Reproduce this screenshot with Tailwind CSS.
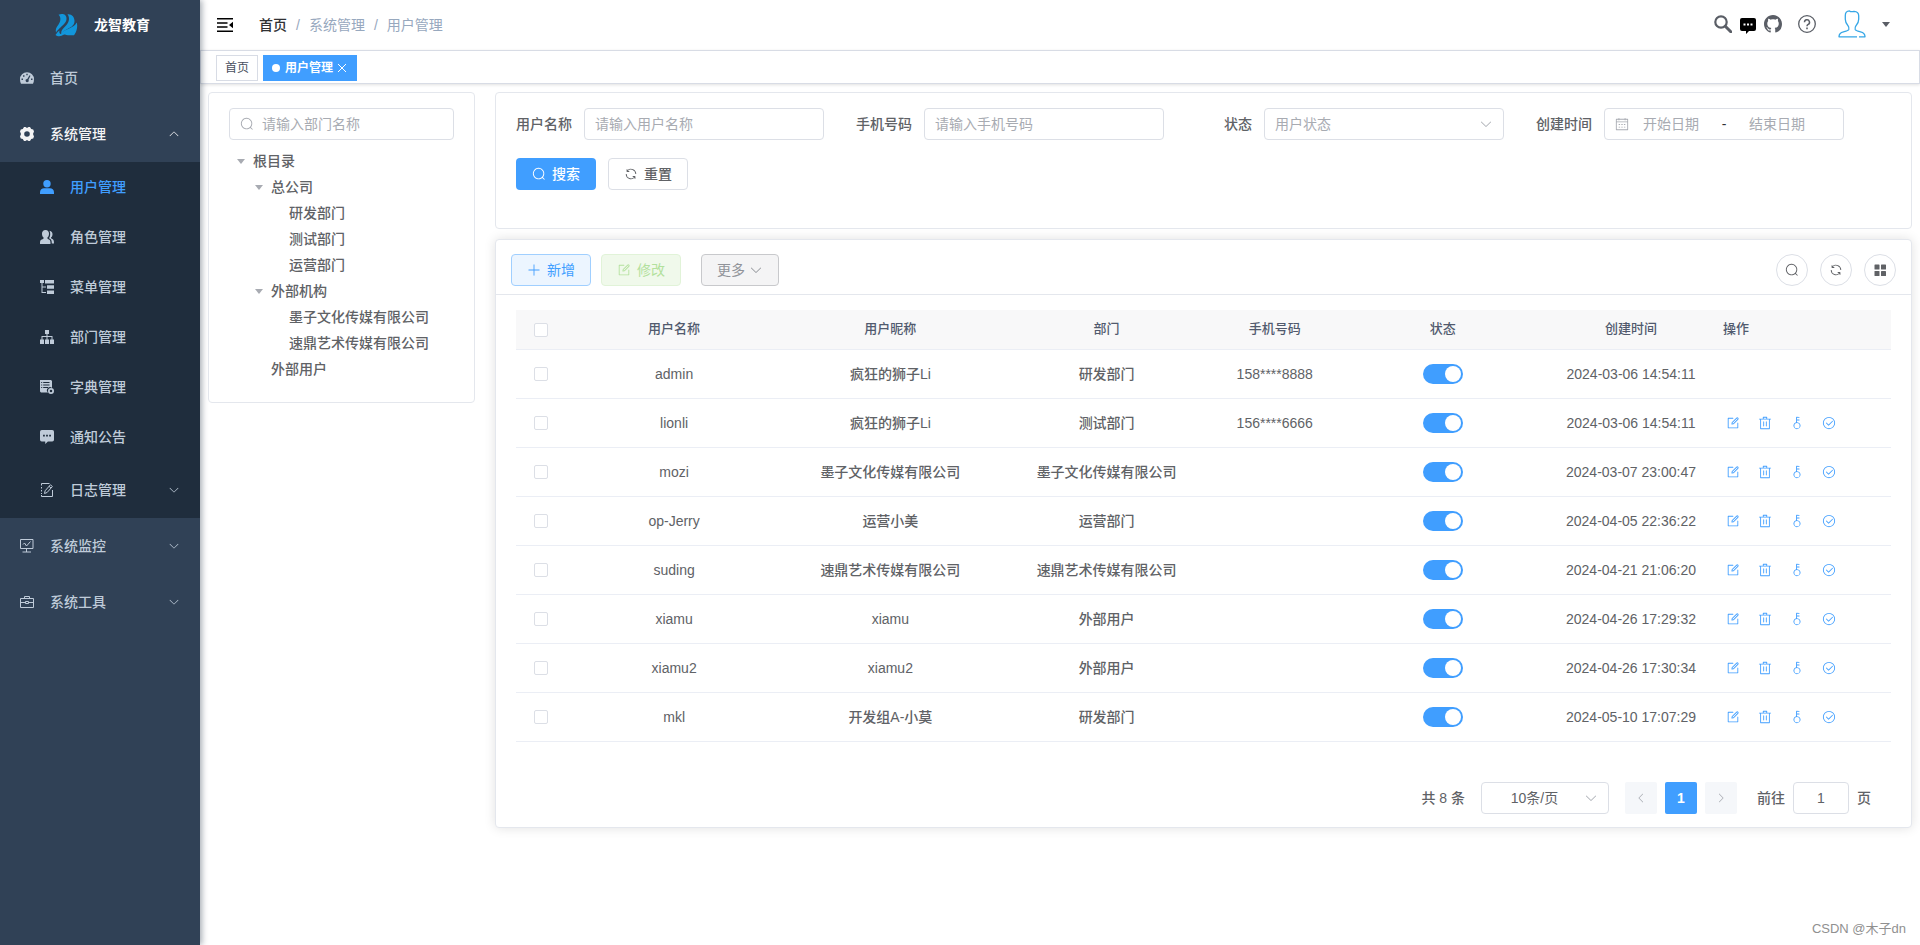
<!DOCTYPE html>
<html lang="zh-CN">
<head>
<meta charset="utf-8">
<title>用户管理</title>
<script src="https://cdn.jsdelivr.net/npm/@tailwindcss/browser@4"></script>
</head>
<body class="bg-white text-sm text-[#606266] font-['Liberation_Sans','Noto_Sans_CJK_SC',sans-serif]">
<svg class="hidden" aria-hidden="true">
  <symbol id="search" viewBox="0 0 1024 1024"><path d="m795.904 750.72 124.992 124.928a32 32 0 0 1-45.248 45.248L750.656 795.904a416 416 0 1 1 45.248-45.248zM480 832a352 352 0 1 0 0-704 352 352 0 0 0 0 704"/></symbol>
  <symbol id="refresh" viewBox="0 0 1024 1024"><path d="M771.776 794.88A384 384 0 0 1 128 512h64a320 320 0 0 0 555.712 216.448H654.72a32 32 0 1 1 0-64h149.056a32 32 0 0 1 32 32v148.928a32 32 0 1 1-64 0v-50.56zM276.288 295.616h92.992a32 32 0 0 1 0 64H220.16a32 32 0 0 1-32-32V178.56a32 32 0 0 1 64 0v50.56A384 384 0 0 1 896.128 512h-64a320 320 0 0 0-555.776-216.384z"/></symbol>
  <symbol id="down" viewBox="0 0 1024 1024"><path d="M831.872 340.864 512 652.672 192.128 340.864a30.592 30.592 0 0 0-42.752 0 29.12 29.12 0 0 0 0 41.6L489.664 714.24a32 32 0 0 0 44.672 0l340.288-331.712a29.12 29.12 0 0 0 0-41.728 30.592 30.592 0 0 0-42.752 0z"/></symbol>
  <symbol id="edit" viewBox="0 0 1024 1024"><path d="M832 512a32 32 0 1 1 64 0v352a32 32 0 0 1-32 32H160a32 32 0 0 1-32-32V160a32 32 0 0 1 32-32h352a32 32 0 0 1 0 64H192v640h640z"/><path d="m469.952 554.24 52.8-7.552L847.104 222.4a32 32 0 1 0-45.248-45.248L477.44 501.44l-7.552 52.8zm422.4-422.4a96 96 0 0 1 0 135.808l-331.84 331.84a32 32 0 0 1-18.112 9.088L436.8 623.68a32 32 0 0 1-36.224-36.224l15.104-105.6a32 32 0 0 1 9.024-18.112l331.904-331.84a96 96 0 0 1 135.744 0z"/></symbol>
  <symbol id="trash" viewBox="0 0 1024 1024"><path d="M160 256H96a32 32 0 0 1 0-64h256V95.936a32 32 0 0 1 32-32h256a32 32 0 0 1 32 32V192h256a32 32 0 1 1 0 64h-64v672a32 32 0 0 1-32 32H192a32 32 0 0 1-32-32zm448-64v-64H416v64zM224 896h576V256H224zm192-128a32 32 0 0 1-32-32V416a32 32 0 0 1 64 0v320a32 32 0 0 1-32 32m192 0a32 32 0 0 1-32-32V416a32 32 0 0 1 64 0v320a32 32 0 0 1-32 32"/></symbol>
  <symbol id="key" viewBox="0 0 1024 1024"><path d="M448 456.064V96a32 32 0 0 1 32-32.064L672 64a32 32 0 0 1 0 64H512v128h160a32 32 0 0 1 0 64H512v128a256 256 0 1 1-64 8.064M512 896a192 192 0 1 0 0-384 192 192 0 0 0 0 384"/></symbol>
  <symbol id="check" viewBox="0 0 1024 1024"><path d="M512 896a384 384 0 1 0 0-768 384 384 0 0 0 0 768m0 64a448 448 0 1 1 0-896 448 448 0 0 1 0 896"/><path d="M745.344 361.344a32 32 0 0 1 45.312 45.312l-288 288a32 32 0 0 1-45.312 0l-160-160a32 32 0 1 1 45.312-45.312L480 626.752z"/></symbol>
  <symbol id="calendar" viewBox="0 0 1024 1024"><path d="M128 384v512h768V192H768v32a32 32 0 1 1-64 0v-32H320v32a32 32 0 0 1-64 0v-32H128v128h768v64zm192-256h384V96a32 32 0 1 1 64 0v32h160a32 32 0 0 1 32 32v768a32 32 0 0 1-32 32H96a32 32 0 0 1-32-32V160a32 32 0 0 1 32-32h160V96a32 32 0 0 1 64 0zm-32 384h64a32 32 0 0 1 0 64h-64a32 32 0 0 1 0-64m0 192h64a32 32 0 1 1 0 64h-64a32 32 0 1 1 0-64m192-192h64a32 32 0 0 1 0 64h-64a32 32 0 0 1 0-64m0 192h64a32 32 0 1 1 0 64h-64a32 32 0 1 1 0-64m192-192h64a32 32 0 1 1 0 64h-64a32 32 0 1 1 0-64m0 192h64a32 32 0 1 1 0 64h-64a32 32 0 1 1 0-64"/></symbol>
  <symbol id="plus" viewBox="0 0 1024 1024"><path d="M480 480V128a32 32 0 0 1 64 0v352h352a32 32 0 1 1 0 64H544v352a32 32 0 1 1-64 0V544H128a32 32 0 0 1 0-64z"/></symbol>
  <symbol id="grid" viewBox="0 0 14 14"><rect x="1.500" y="1.500" width="5" height="5" rx=".6"/><rect x="8" y="1.500" width="5" height="5" rx=".6"/><rect x="1.500" y="8" width="5" height="5" rx=".6"/><rect x="8" y="8" width="5" height="5" rx=".6"/></symbol>
  <symbol id="message" viewBox="0 0 16 16"><path fill-rule="evenodd" d="M2 0h12a2 2 0 0 1 2 2v9a2 2 0 0 1-2 2H9l-3 3v-3H2a2 2 0 0 1-2-2V2a2 2 0 0 1 2-2zm1.500 5.500v2h2v-2zm3.500 0v2h2v-2zm3.500 0v2h2v-2z"/></symbol>
  <symbol id="caret" viewBox="0 0 8 5"><path d="M0 0h8L4 5z"/></symbol>
</svg>

<div class="flex min-h-screen">
  <aside class="relative z-10 w-[200px] shrink-0 bg-[#304156] text-[#bfcbd9] font-medium shadow-[2px_0_6px_rgba(0,21,41,0.35)]">
    <a href="#" class="flex h-[50px] items-center justify-center gap-4 pl-1 text-white">
      <svg class="size-6" viewBox="0 0 24 24" fill="#1296db"><path d="M4.500 1.800C8 .2 12.500 1 12.500 5.500c0 4-3 6-5.500 8.500-1.800 1.700-4 3.500-5 5.500-.8-3 .5-5.500 2.500-8C6.500 8.800 7.500 4.500 4.500 1.800z"/><path d="M13.500 1.200C18 .8 20.500 4 20.500 8c0 5-4.500 6.500-8 8.500-2.500 1.400-4 2.500-5 4.500-1-3.500 2-5.500 4.500-8.500 2.500-2.800 4.500-7 1.500-11.300z"/><path d="M22.700 9.500c1.200 3.500.3 9-2.700 12.700-2 .3-6.500.3-9-.7-1.200-.4-2.500.5-3.500 1.300-2 .8-4.500.4-6-.8 1.500-2 2-3 4-4.500-.6 2 .3 3.500 1.500 3.500 1.500-3 4.500-3.800 7.500-5.200 3.500-1.600 6.500-3 8.200-6.300z"/></svg>
      <span class="font-bold">龙智教育</span>
    </a>
    <nav>
      <a href="#" class="flex h-14 items-center gap-4 px-5"><svg class="size-3.5" viewBox="0 0 14 14" fill="currentColor"><path fill-rule="evenodd" d="M7 1.200a7 7 0 0 1 7 7c0 1.700-.3 3.300-1 4.600H1c-.7-1.300-1-2.900-1-4.600a7 7 0 0 1 7-7zM6.300 2.700v1.600h1.400V2.700zM3 4.200v1.600h1.500V4.200zM9.500 4.200L7.300 8A1.600 1.600 0 1 0 8.500 8.700l2-4zM1.500 7.500V9H3V7.500zm9.500 0V9h1.500V7.500z"/></svg>首页</a>
      <a href="#" class="flex h-14 items-center gap-4 px-5 text-[#f4f4f5]"><svg class="size-3.5" viewBox="0 0 14 14" fill="currentColor"><path fill-rule="evenodd" d="M4 0h1.500L7 1 8.500 0H10l1.200 2 2 .6.800 1.900L13 7l1 2.500-.8 1.900-2 .6L10 14H8.500L7 13l-1.500 1H4l-1.200-2-2-.6L0 9.500 1 7 0 4.500l.8-1.900 2-.6zM7 4.200a2.800 2.800 0 1 0 0 5.600 2.800 2.800 0 0 0 0-5.600z"/></svg>系统管理<svg class="ml-auto size-3 rotate-180" fill="currentColor"><use href="#down"/></svg></a>
      <div class="bg-[#1f2d3d]">
        <a href="#" class="flex h-[50px] items-center gap-4 pl-10 pr-5 text-[#409eff]"><svg class="size-3.5" viewBox="0 0 14 14" fill="currentColor"><circle cx="7" cy="3.700" r="3.700"/><path d="M0 14v-1.500C0 9.500 2 8.300 4 8.300h6c2 0 4 1.200 4 4.200V14z"/></svg>用户管理</a>
        <a href="#" class="flex h-[50px] items-center gap-4 pl-10 pr-5"><svg class="size-3.5" viewBox="0 0 14 14" fill="currentColor"><path d="M5.500 0C8 0 9 1.800 9 3.800 9 5.600 8.300 7 7.300 7.800c0 1 .7 1.300 1.700 1.800 1.200.6 1.500 1.500 1.500 4.400H0c0-3 .3-3.800 1.800-4.400 1.200-.5 1.900-.8 1.900-1.800C2.700 7 2 5.600 2 3.800 2 1.800 3 0 5.500 0z"/><path d="M9.500.8c2 .2 3 1.700 3 3.400 0 1.500-.6 2.600-1.500 3.300 0 .9.500 1.200 1.300 1.600 1.200.6 1.700 1.500 1.700 4.400h-2.200c0-3-.6-4.200-2.800-5.200 1.200-1.700 1.800-4.800.5-7.500z"/></svg>角色管理</a>
        <a href="#" class="flex h-[50px] items-center gap-4 pl-10 pr-5"><svg class="size-3.5" viewBox="0 0 14 14" fill="currentColor"><path d="M0 0h4v3H2.500v3.500H6v1H2.500V12H6v1H1.500V3H0zM5 0h9v3.600H5zM7 5.200h7v3.600H7zM7 10.400h7V14H7z"/></svg>菜单管理</a>
        <a href="#" class="flex h-[50px] items-center gap-4 pl-10 pr-5"><svg class="size-3.5" viewBox="0 0 14 14" fill="currentColor"><path d="M5 0h4v4H7.500v2H12.500v3.500H14V14h-4V9.500h1.500V7h-4v2.500H9V14H5V9.500h1.500V7h-4v2.500H4V14H0V9.500h1.500V6h5V4H5z"/></svg>部门管理</a>
        <a href="#" class="flex h-[50px] items-center gap-4 pl-10 pr-5"><svg class="size-3.5" viewBox="0 0 14 14" fill="currentColor"><path fill-rule="evenodd" d="M0 0h11l1 1v7a3 3 0 0 0-4 4.500H1L0 11.500zM1.200 2v1h1V2zM3.200 2v1H9.500V2zM1.200 4.500v1h1v-1zm2 0v1h6.300v-1zM1.200 7v1h1V7zm2 0v1H8V7z"/><path fill-rule="evenodd" d="M11 8a3 3 0 1 1 0 6 3 3 0 0 1 0-6zm0 1.700a1.300 1.300 0 1 0 0 2.600 1.300 1.300 0 0 0 0-2.600z"/></svg>字典管理</a>
        <a href="#" class="flex h-[50px] items-center gap-4 pl-10 pr-5"><svg class="size-3.5" fill="currentColor"><use href="#message"/></svg>通知公告</a>
        <a href="#" class="flex h-14 items-center gap-4 pl-10 pr-5"><svg class="size-3.5" viewBox="0 0 14 14" fill="none" stroke="currentColor"><path d="M1.500 2.500v-2h8M12.500 7v6.500h-11V12M1.500 4v1.500M1.500 7v1.500M1.500 10v1"/><path d="M4.500 10.500l.6-2.700 5.300-6 2 1.700-5.300 6zM9 3.300l2 1.700"/></svg>日志管理<svg class="ml-auto size-3" fill="currentColor"><use href="#down"/></svg></a>
      </div>
      <a href="#" class="flex h-14 items-center gap-4 px-5"><svg class="size-3.5" viewBox="0 0 14 14" fill="none" stroke="currentColor"><path d="M.5.500h12.500v9H.5zM6.500 9.500V13M2.500 13h8.500M3 5.500l1.500-1.500L6.500 7l4-4.500"/></svg>系统监控<svg class="ml-auto size-3" fill="currentColor"><use href="#down"/></svg></a>
      <a href="#" class="flex h-14 items-center gap-4 px-5"><svg class="size-3.5" viewBox="0 0 14 14" fill="none" stroke="currentColor"><path d="M.5 3.500h13v9H.5zM4.500 3.500v-2h5v2M.5 7.500h5M8.500 7.500h5M5.500 6.500h3v2h-3z"/></svg>系统工具<svg class="ml-auto size-3" fill="currentColor"><use href="#down"/></svg></a>
    </nav>
  </aside>

  <div class="flex min-w-0 flex-1 flex-col">
    <header class="flex h-[50px] items-center pl-[15px] pr-[30px]">
      <button type="button" aria-label="收起菜单" class="flex size-5 items-center justify-center"><svg class="size-4" viewBox="0 0 16 16" fill="#000"><path d="M0 1h16v1.600H0zM0 5.200h10.500v1.600H0zM0 9.200h10.500v1.600H0zM0 13.400h16V15H0zM16 4.800v6.400L12 8z"/></svg></button>
      <nav aria-label="面包屑" class="ml-6 flex items-center gap-[9px] text-[#97a8be]">
        <a href="#" class="font-medium text-[#303133]">首页</a><span>/</span><span>系统管理</span><span>/</span><span>用户管理</span>
      </nav>
      <div class="ml-auto flex items-center pb-0.5 text-[#5a5e66]">
        <button type="button" aria-label="搜索"><svg class="size-[18px]" viewBox="0 0 18 18" fill="none" stroke="currentColor"><circle cx="7" cy="7" r="5.700" stroke-width="2.200"/><path d="M11.300 11.300l5.500 5.500" stroke-width="3" stroke-linecap="round"/></svg></button>
        <button type="button" aria-label="消息" class="ml-2 pt-1"><svg class="size-4 text-black" fill="currentColor"><use href="#message"/></svg></button>
        <a href="#" aria-label="GitHub" class="ml-2"><svg class="size-[18px]" viewBox="0 0 16 16" fill="currentColor"><path d="M8 0C3.580 0 0 3.580 0 8c0 3.540 2.290 6.530 5.470 7.590.4.070.55-.17.55-.38 0-.19-.01-.82-.01-1.490-2.010.37-2.530-.49-2.690-.94-.09-.23-.48-.94-.82-1.130-.28-.15-.68-.52-.01-.53.63-.01 1.080.58 1.230.82.72 1.210 1.870.87 2.330.66.07-.52.28-.87.51-1.070-1.780-.2-3.640-.89-3.640-3.950 0-.87.31-1.590.82-2.150-.08-.2-.36-1.020.08-2.120 0 0 .67-.21 2.200.82.64-.18 1.320-.27 2-.27s1.360.09 2 .27c1.530-1.040 2.200-.82 2.200-.82.44 1.100.16 1.920.08 2.120.51.56.82 1.270.82 2.150 0 3.070-1.870 3.750-3.650 3.950.29.25.54.73.54 1.480 0 1.070-.01 1.930-.01 2.200 0 .21.15.46.55.38A8.010 8.010 0 0 0 16 8c0-4.420-3.580-8-8-8z"/></svg></a>
        <a href="#" aria-label="帮助" class="ml-4"><svg class="size-[18px]" viewBox="0 0 18 18" fill="none" stroke="currentColor"><circle cx="9" cy="9" r="8.300" stroke-width="1.300"/><path d="M6.500 7.200a2.500 2.500 0 1 1 3.700 2.200c-.9.500-1.200.9-1.200 1.800" stroke-width="1.500"/><path d="M9 12.600v1.600" stroke-width="1.600"/></svg></a>
        <button type="button" aria-label="用户菜单" class="ml-[22px] flex items-center gap-4"><svg class="size-7" viewBox="0 0 28 28" fill="none" stroke="#35a6e6" stroke-width="1.300" stroke-linejoin="round"><path d="M19 26.800H1c0-3 1.500-4.300 4.500-5 2.500-.6 4.700-1 5.300-2.300.4-1.200 0-2.700-.8-3.800C8.300 14 7.300 12 7.300 9.300V5.500C7.300 2.500 9 1 11.500.9c1 .8 3 .9 4.500.4 3 .2 4.700 1.700 4.700 4.500v3.500c0 2.700-1 4.700-2.700 6.400-.8 1.100-1.200 2.600-.8 3.800.6 1.300 2.800 1.700 5.300 2.300 3 .7 4.500 2 4.500 5h-6"/></svg><svg class="h-[5px] w-2" fill="currentColor"><use href="#caret"/></svg></button>
      </div>
    </header>

    <div class="flex h-[34px] items-start gap-[5px] border border-[#d8dce5] px-[15px] pt-1 text-xs shadow-[0_1px_3px_rgba(0,0,0,0.12)]">
      <a href="#" class="flex h-[26px] items-center border border-[#d8dce5] px-2 text-[#495060]">首页</a>
      <a href="#" class="flex h-[26px] items-center gap-[5px] border border-[#409eff] bg-[#409eff] px-2 font-bold text-white"><span class="size-2 rounded-full bg-white"></span>用户管理<svg class="mr-0.5 size-2" viewBox="0 0 8 8" stroke="currentColor"><path d="M0 0l8 8M8 0L0 8"/></svg></a>
    </div>

    <main class="flex flex-1 items-start gap-5 p-2">
      <section class="w-[267px] shrink-0 rounded border border-[#e4e7ed] px-5 pb-5 pt-[15px]">
        <label class="flex h-8 items-center gap-2 rounded border border-[#dcdfe6] px-2.5"><svg class="size-3.5 shrink-0" fill="#a8abb2"><use href="#search"/></svg><input type="text" aria-label="部门名称" placeholder="请输入部门名称" class="w-full min-w-0 outline-none placeholder:text-[#a8abb2]"></label>
        <ul class="mt-2 font-medium">
          <li class="flex h-[26px] items-center gap-2 pl-2"><svg class="h-[5px] w-2" fill="#a8abb2"><use href="#caret"/></svg>根目录</li>
          <li class="flex h-[26px] items-center gap-2 pl-[26px]"><svg class="h-[5px] w-2" fill="#a8abb2"><use href="#caret"/></svg>总公司</li>
          <li class="flex h-[26px] items-center pl-[60px]">研发部门</li>
          <li class="flex h-[26px] items-center pl-[60px]">测试部门</li>
          <li class="flex h-[26px] items-center pl-[60px]">运营部门</li>
          <li class="flex h-[26px] items-center gap-2 pl-[26px]"><svg class="h-[5px] w-2" fill="#a8abb2"><use href="#caret"/></svg>外部机构</li>
          <li class="flex h-[26px] items-center pl-[60px]">墨子文化传媒有限公司</li>
          <li class="flex h-[26px] items-center pl-[60px]">速鼎艺术传媒有限公司</li>
          <li class="flex h-[26px] items-center pl-[42px]">外部用户</li>
        </ul>
      </section>

      <div class="flex min-w-0 flex-1 flex-col gap-2.5">
        <form class="flex flex-wrap gap-x-8 gap-y-[18px] rounded border border-[#e4e7ed] px-5 pb-[38px] pt-[15px]">
          <div class="flex items-center"><label for="name" class="w-[68px] pr-3 text-right font-medium">用户名称</label><input id="name" type="text" placeholder="请输入用户名称" class="h-8 w-60 rounded border border-[#dcdfe6] px-2.5 outline-none placeholder:text-[#a8abb2]"></div>
          <div class="flex items-center"><label for="phone" class="w-[68px] pr-3 text-right font-medium">手机号码</label><input id="phone" type="text" placeholder="请输入手机号码" class="h-8 w-60 rounded border border-[#dcdfe6] px-2.5 outline-none placeholder:text-[#a8abb2]"></div>
          <div class="flex items-center"><label for="status" class="w-[68px] pr-3 text-right font-medium">状态</label>
            <div class="relative"><select id="status" class="h-8 w-60 appearance-none rounded border border-[#dcdfe6] px-2.5 text-[#a8abb2] outline-none"><option>用户状态</option><option>正常</option><option>停用</option></select><svg class="pointer-events-none absolute right-[11px] top-[9px] size-3.5" fill="#a8abb2"><use href="#down"/></svg></div></div>
          <div class="flex items-center"><label for="start" class="w-[68px] pr-3 text-right font-medium">创建时间</label>
            <div class="flex h-8 w-60 items-center rounded border border-[#dcdfe6] px-2.5"><svg class="size-3.5 shrink-0" fill="#a8abb2"><use href="#calendar"/></svg><input id="start" type="text" placeholder="开始日期" class="w-[84px] text-center outline-none placeholder:text-[#a8abb2]"><span class="w-[22px] text-center text-[#303133]">-</span><input type="text" aria-label="结束日期" placeholder="结束日期" class="w-[84px] text-center outline-none placeholder:text-[#a8abb2]"></div></div>
          <div class="flex gap-3">
            <button type="button" class="flex h-8 w-20 items-center justify-center gap-1.5 rounded bg-[#409eff] font-medium text-white"><svg class="size-3.5" fill="currentColor"><use href="#search"/></svg>搜索</button>
            <button type="button" class="flex h-8 w-20 items-center justify-center gap-1.5 rounded border border-[#dcdfe6] font-medium"><svg class="size-3.5" fill="currentColor"><use href="#refresh"/></svg>重置</button>
          </div>
        </form>

        <section class="rounded border border-[#e4e7ed] bg-white shadow-[0_0_12px_rgba(0,0,0,0.12)]">
          <div class="flex h-[55px] items-center border-b border-[#e4e7ed] px-[15px] pt-1.5">
            <div class="flex gap-2.5">
              <button type="button" class="flex h-8 w-20 items-center justify-center gap-1.5 rounded border border-[#a0cfff] bg-[#ecf5ff] text-[#409eff]"><svg class="size-3.5" fill="currentColor"><use href="#plus"/></svg>新增</button>
              <button type="button" disabled class="flex h-8 w-20 items-center justify-center gap-1.5 rounded border border-[#e1f3d8] bg-[#f0f9eb] text-[#b3e19d]"><svg class="size-3.5" fill="currentColor"><use href="#edit"/></svg>修改</button>
              <button type="button" class="ml-2.5 flex h-8 items-center gap-1 rounded border border-[#c8c9cc] bg-[#f4f4f5] px-[15px] text-[#909399]">更多<svg class="size-3.5" fill="currentColor"><use href="#down"/></svg></button>
            </div>
            <div class="ml-auto flex gap-3">
              <button type="button" aria-label="显示搜索" class="flex size-8 items-center justify-center rounded-full border border-[#dcdfe6]"><svg class="size-3.5" fill="currentColor"><use href="#search"/></svg></button>
              <button type="button" aria-label="刷新" class="flex size-8 items-center justify-center rounded-full border border-[#dcdfe6]"><svg class="size-3.5" fill="currentColor"><use href="#refresh"/></svg></button>
              <button type="button" aria-label="显隐列" class="flex size-8 items-center justify-center rounded-full border border-[#dcdfe6]"><svg class="size-3.5" fill="currentColor"><use href="#grid"/></svg></button>
            </div>
          </div>
          <div class="px-5 pb-[13px] pt-[15px]">
            <table class="w-full table-fixed border-separate border-spacing-0 text-center">
              <colgroup><col class="w-[50px]"><col><col><col><col class="w-[120px]"><col><col class="w-[160px]"><col class="w-[180px]"></colgroup>
              <thead>
                <tr class="h-10 bg-[#f8f8f9] text-[13px] text-[#515a6e]">
                  <th class="border-b border-[#ebeef5]"><input type="checkbox" aria-label="全选" class="block mx-auto size-3.5 appearance-none rounded-[2px] border border-[#dcdfe6] bg-white"></th>
                  <th class="border-b border-[#ebeef5] font-medium">用户名称</th><th class="border-b border-[#ebeef5] font-medium">用户昵称</th><th class="border-b border-[#ebeef5] font-medium">部门</th><th class="border-b border-[#ebeef5] font-medium">手机号码</th><th class="border-b border-[#ebeef5] font-medium">状态</th><th class="border-b border-[#ebeef5] font-medium">创建时间</th><th class="border-b border-[#ebeef5] pl-3 text-left font-medium">操作</th>
                </tr>
              </thead>
              <tbody id="rows"></tbody>
            </table>
            <div class="mt-10 flex items-center justify-end pr-5">
              <span class="font-medium">共 8 条</span>
              <div class="relative ml-4"><select aria-label="每页条数" class="h-8 w-32 appearance-none rounded border border-[#dcdfe6] pl-[11px] pr-8 text-center outline-none"><option>10条/页</option><option>20条/页</option></select><svg class="pointer-events-none absolute right-[11px] top-[9px] size-3.5" fill="#a8abb2"><use href="#down"/></svg></div>
              <div class="ml-4 flex gap-2">
                <button type="button" aria-label="上一页" disabled class="flex size-8 items-center justify-center rounded-[2px] bg-[#f5f7fa] text-[#a8abb2]"><svg class="size-3 rotate-90" fill="currentColor"><use href="#down"/></svg></button>
                <button type="button" class="size-8 rounded-[2px] bg-[#409eff] font-bold text-white">1</button>
                <button type="button" aria-label="下一页" disabled class="flex size-8 items-center justify-center rounded-[2px] bg-[#f5f7fa] text-[#a8abb2]"><svg class="size-3 -rotate-90" fill="currentColor"><use href="#down"/></svg></button>
              </div>
              <label class="ml-5 flex items-center gap-2 font-medium">前往<input type="text" value="1" class="h-8 w-14 rounded border border-[#dcdfe6] text-center font-normal outline-none">页</label>
            </div>
          </div>
        </section>
      </div>
    </main>
    <footer class="px-[14px] pb-1.5 text-right text-[13px] text-[#909090]">CSDN @木子dn</footer>
  </div>
</div>

<script>
const users = [
  ['admin', '疯狂的狮子Li', '研发部门', '158****8888', '2024-03-06 14:54:11'],
  ['lionli', '疯狂的狮子Li', '测试部门', '156****6666', '2024-03-06 14:54:11'],
  ['mozi', '墨子文化传媒有限公司', '墨子文化传媒有限公司', '', '2024-03-07 23:00:47'],
  ['op-Jerry', '运营小美', '运营部门', '', '2024-04-05 22:36:22'],
  ['suding', '速鼎艺术传媒有限公司', '速鼎艺术传媒有限公司', '', '2024-04-21 21:06:20'],
  ['xiamu', 'xiamu', '外部用户', '', '2024-04-26 17:29:32'],
  ['xiamu2', 'xiamu2', '外部用户', '', '2024-04-26 17:30:34'],
  ['mkl', '开发组A-小莫', '研发部门', '', '2024-05-10 17:07:29'],
];
const actions = [['edit', '修改'], ['trash', '删除'], ['key', '重置密码'], ['check', '分配角色']];
document.getElementById('rows').innerHTML = users.map(([name, nick, dept, phone, time], i) => `
  <tr class="h-[49px]">
    <td class="border-b border-[#ebeef5]"><input type="checkbox" aria-label="选择 ${name}" class="block mx-auto size-3.5 appearance-none rounded-[2px] border border-[#dcdfe6] bg-white"></td>
    <td class="border-b border-[#ebeef5]">${name}</td>
    <td class="border-b border-[#ebeef5] font-medium">${nick}</td>
    <td class="border-b border-[#ebeef5] font-medium">${dept}</td>
    <td class="border-b border-[#ebeef5]">${phone}</td>
    <td class="border-b border-[#ebeef5]"><input type="checkbox" role="switch" checked aria-label="${name} 状态" class="mx-auto flex h-5 w-10 appearance-none items-center justify-end rounded-full bg-[#409eff] pr-0.5 before:block before:size-4 before:rounded-full before:bg-white"></td>
    <td class="whitespace-nowrap border-b border-[#ebeef5]">${time}</td>
    <td class="border-b border-[#ebeef5] pl-1.5">${i ? `<div class="flex text-[#409eff]">${actions.map(([icon, label]) => `<button type="button" aria-label="${label}" class="flex h-6 w-8 items-center justify-center"><svg class="size-3.5" fill="currentColor"><use href="#${icon}"/></svg></button>`).join('')}</div>` : ''}</td>
  </tr>`).join('');
</script>
</body>
</html>
